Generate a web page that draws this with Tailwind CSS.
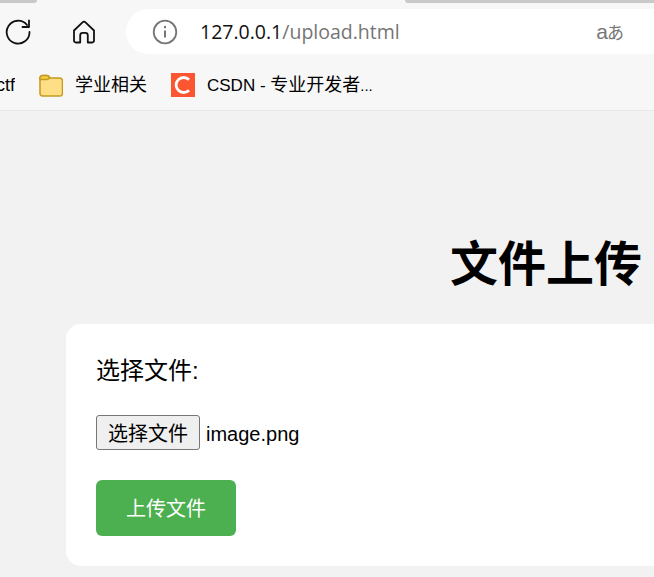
<!DOCTYPE html>
<html lang="zh-CN">
<head>
  <meta charset="UTF-8">
  <title>文件上传</title>
  <script src="https://cdn.jsdelivr.net/npm/@tailwindcss/browser@4"></script>
</head>
<body class="bg-[#f2f2f2] text-black overflow-hidden h-[577px] font-['Liberation_Sans','Noto_Sans_CJK_SC',sans-serif]">

  <!-- browser toolbar -->
  <div class="bg-[#f7f7f7] h-[111px] border-b border-[#e8e8e8] overflow-hidden">
    <div class="h-[3px] flex justify-between">
      <div class="w-[37px] bg-[#c9c9c9] rounded-br-lg"></div>
      <div class="w-[249px] bg-[#c9c9c9] rounded-bl-lg"></div>
    </div>
    <div class="h-[45px] mt-[6px] flex items-center">
      <svg class="w-[26px] h-[26px] ml-[5px]" viewBox="0 0 26 26" fill="none" stroke="#111" stroke-width="1.8" stroke-linecap="round" stroke-linejoin="round">
        <path d="M22 6A11.400 11.400 0 1 0 24.500 13"/>
        <path d="M24 1.500V8h-6.500"/>
      </svg>
      <svg class="w-[24px] h-[24px] ml-[41px]" viewBox="0 0 24 24" fill="none" stroke="#111" stroke-width="1.8" stroke-linejoin="round">
        <path d="M2 10.500 10.500 2.300a2 2 0 0 1 3 0L22 10.500v10.200a1.800 1.800 0 0 1-1.800 1.800h-4.400v-7.200a2.500 2.500 0 0 0-2.500-2.500h-2.600a2.500 2.500 0 0 0-2.500 2.500v7.200H3.800A1.800 1.800 0 0 1 2 20.700z"/>
      </svg>
      <div class="ml-[30px] flex-1 h-[45px] bg-white rounded-l-[23px] flex items-center">
        <svg class="w-[26px] h-[26px] ml-[26px]" viewBox="0 0 26 26" fill="none" stroke="#757575" stroke-width="1.8">
          <circle cx="13" cy="13" r="11.300"/>
          <path d="M13 11.500v7" stroke-width="2"/>
          <path d="M13 7v2.200" stroke-width="2"/>
        </svg>
        <span class="ml-[22px] text-[19.500px] font-['Open_Sans','Liberation_Sans',sans-serif] text-[#111]">127.0.0.1<span class="text-[#757575]">/upload.html</span></span>
        <span class="ml-auto mr-[31px] flex items-baseline leading-none text-[#757575]"><span class="text-[21px] font-light">a</span><span class="text-[17px] -ml-[1px] -mr-[1px] font-['Noto_Sans_CJK_JP',sans-serif]">あ</span></span>
      </div>
    </div>
    <div class="h-[50px] mt-[6px] flex items-center text-[18px]">
      <span class="w-[15px] overflow-hidden flex justify-end whitespace-nowrap">ctf</span>
      <svg class="w-[24px] h-[23px] ml-[24px]" viewBox="0 0 24 23">
        <path d="M1 4a2.500 2.500 0 0 1 2.500-2.500h4.500a3 3 0 0 1 2.500 1.500l.5 1h9.500a3 3 0 0 1 3 3v12.500a2.500 2.500 0 0 1-2.500 2.500H3.500A2.500 2.500 0 0 1 1 19.500z" fill="#ffdf85" stroke="#c49a1f" stroke-width="1.500"/>
        <path d="M1 4a2.500 2.500 0 0 1 2.500-2.500h4a3 3 0 0 1 2.500 1.500l.5 1-2 1.500H1z" fill="#f7cb45" stroke="#c49a1f" stroke-width="1.500"/>
      </svg>
      <span class="ml-[12px]">学业相关</span>
      <svg class="w-[24px] h-[24px] ml-[24px]" viewBox="0 0 24 24">
        <rect width="24" height="24" fill="#fc5531"/>
        <path d="M18 6.800A7.500 7.500 0 1 0 18 17.200" fill="none" stroke="#fff" stroke-width="2.800"/>
      </svg>
      <span class="ml-[12px] whitespace-nowrap"><span class="text-[17px]">CSDN - </span>专业开发者<span class="text-[15px]">...</span></span>
    </div>
  </div>

  <!-- page -->
  <div class="w-[960px] ml-[66px]">
    <h1 class="mt-[121px] h-[66px] text-[48px] leading-[66px] font-bold text-center">文件上传</h1>
    <div class="mt-[26px] h-[242px] bg-white rounded-[15px] p-[30px]">
      <label class="block text-[24px] leading-[34px]">选择文件:</label>
      <div class="mt-[27px] flex items-center h-[35px]">
        <button class="w-[104px] h-[35px] pt-[2px] bg-[#efefef] border border-[#767676] rounded-[3px] text-[20px] leading-none">选择文件</button>
        <span class="ml-[6px] pt-[2px] text-[20px]">image.png</span>
      </div>
      <button class="block mt-[30px] w-[140px] h-[56px] pt-[2px] bg-[#4caf50] text-white rounded-[6px] text-[20px]">上传文件</button>
    </div>
  </div>

</body>
</html>
